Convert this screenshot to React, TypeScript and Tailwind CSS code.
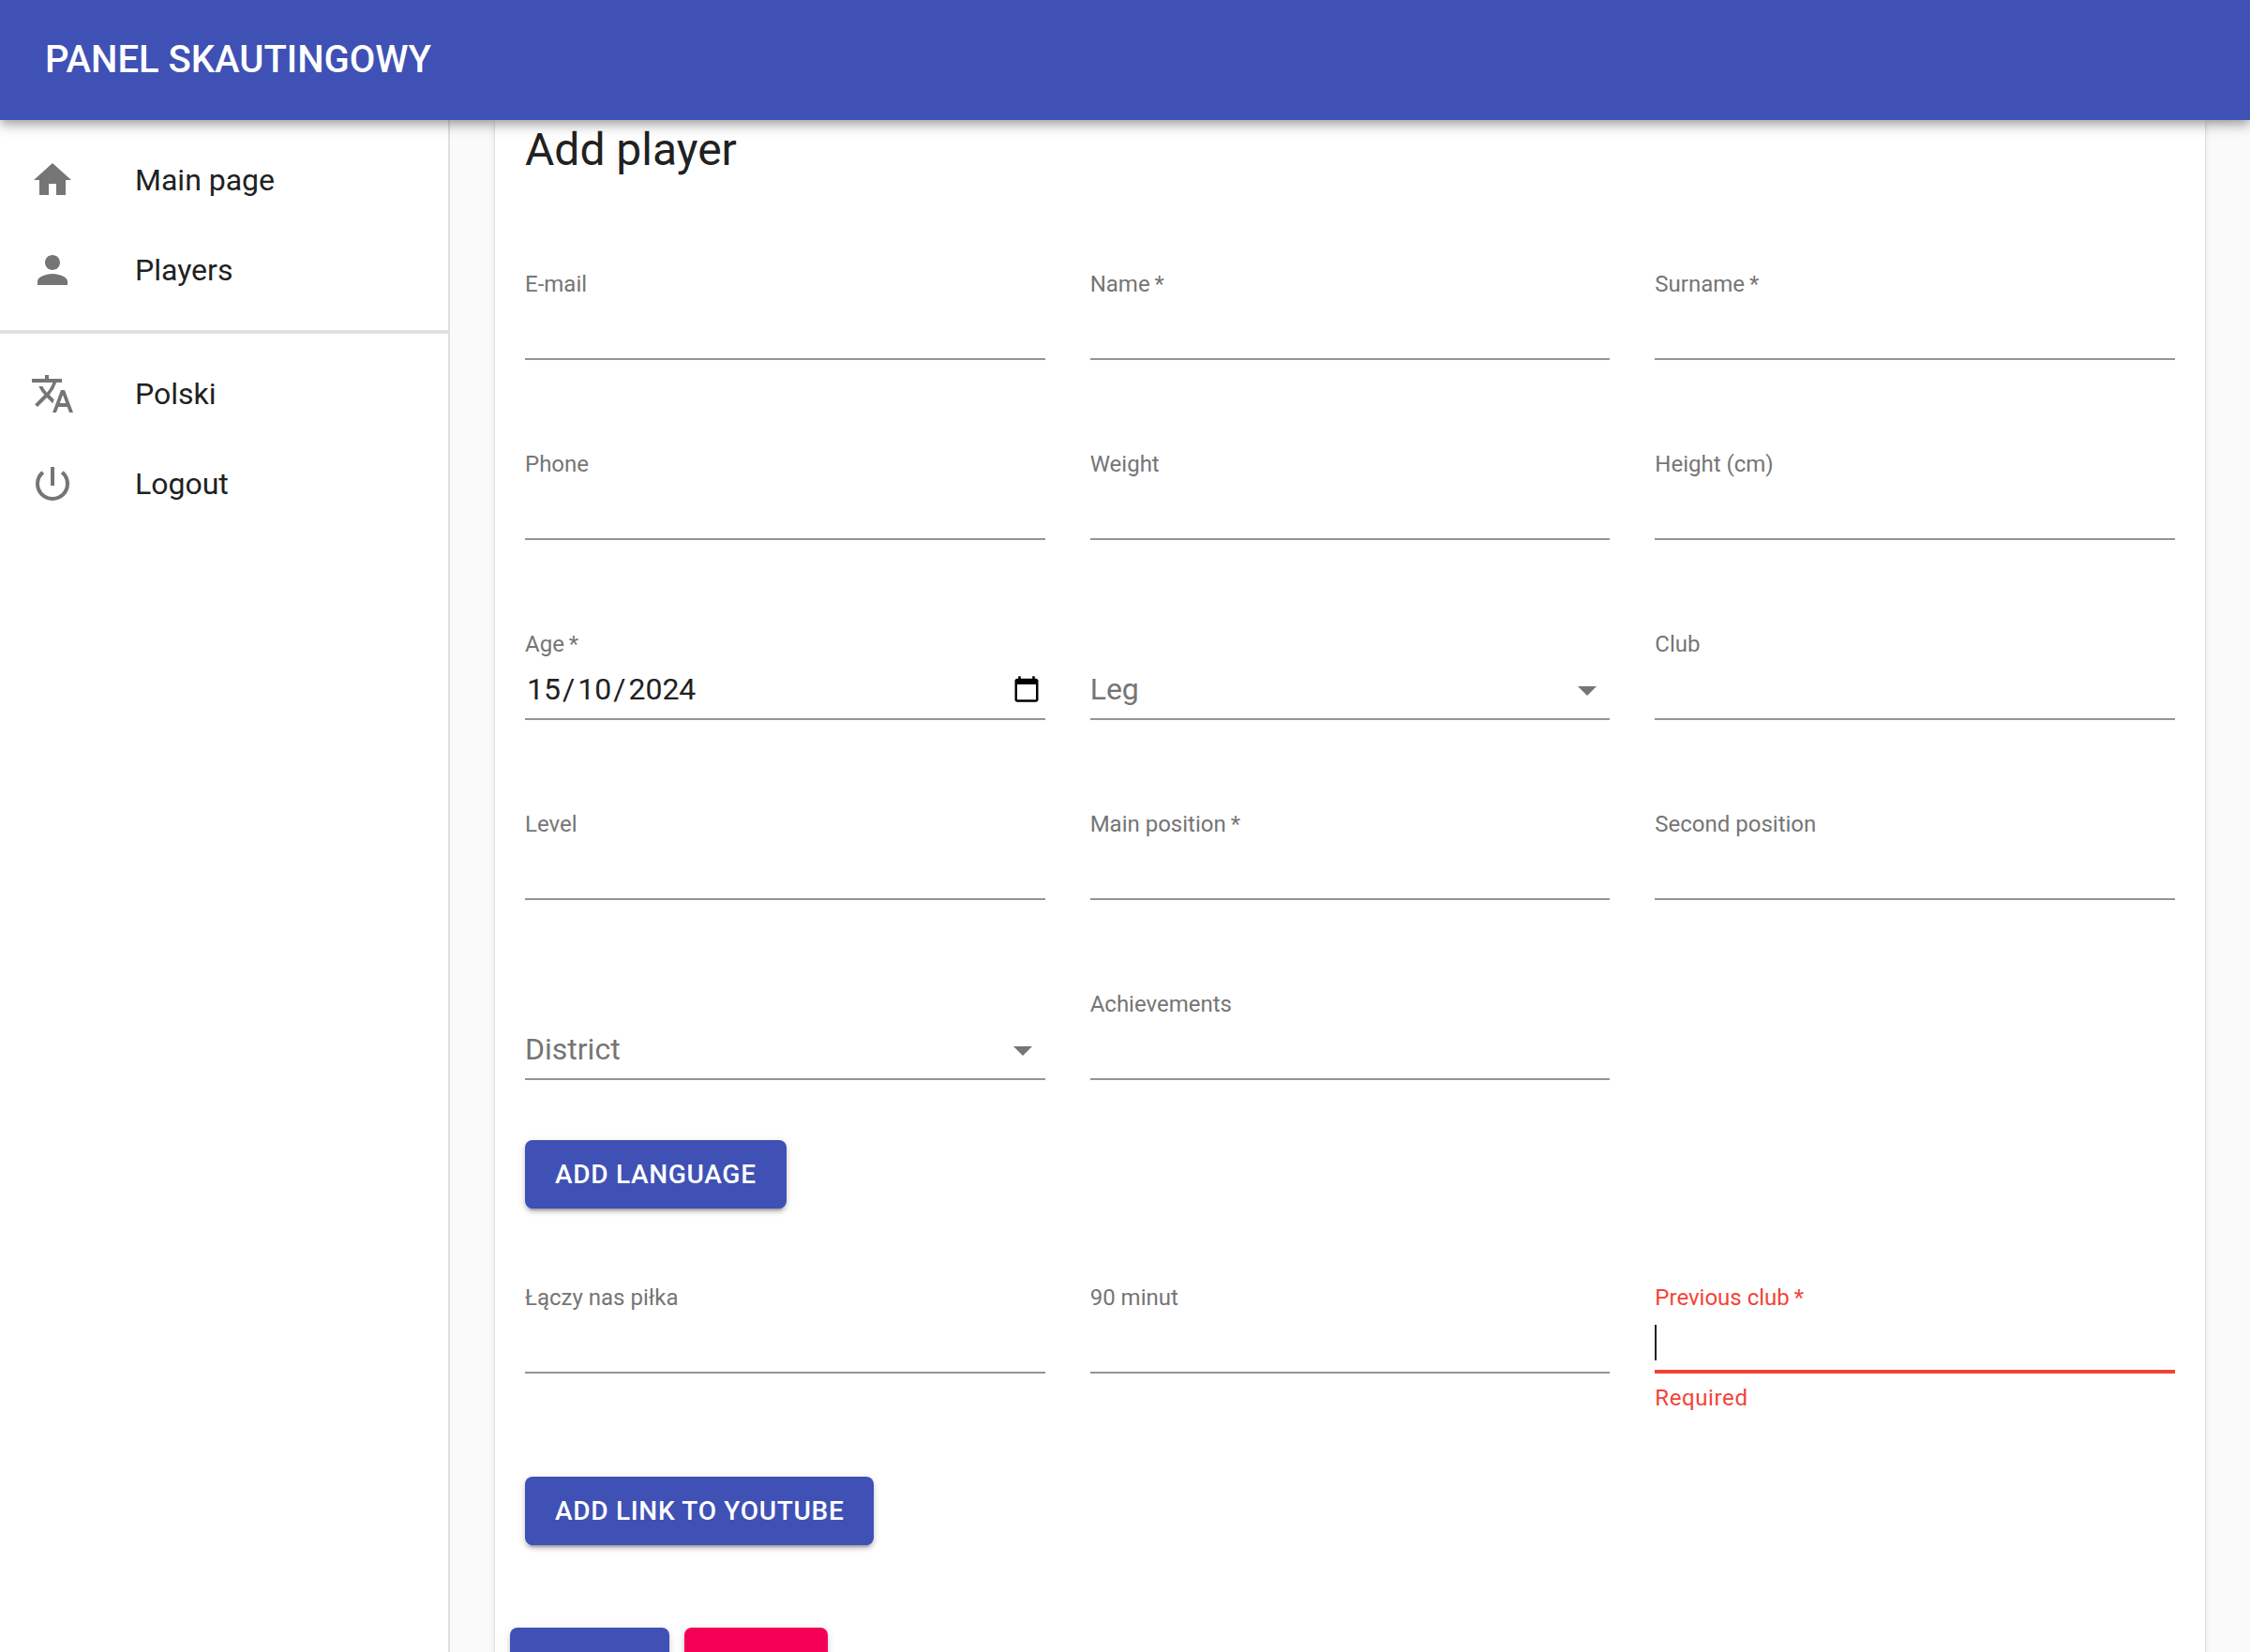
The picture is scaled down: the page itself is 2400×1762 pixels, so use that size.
import type { ReactNode } from "react";
import type { IconType } from "react-icons";
import {
  MdArrowDropDown,
  MdHome,
  MdPerson,
  MdPowerSettingsNew,
  MdTranslate,
} from "react-icons/md";

const labelClass = "mt-[3px] block h-[29px] text-2xl leading-6";
const boxClass = "h-16 border-b-2 border-[#949494]";

function NavItem({ icon: Icon, label }: { icon: IconType; label: string }) {
  return (
    <li>
      <a href="#" className="flex h-24 items-center px-8 text-[32px] leading-12 text-[#212121]">
        <Icon className="mr-16 size-12 text-[#757575]" aria-hidden />
        {label}
      </a>
    </li>
  );
}

function LabelText({ text, required = false }: { text: string; required?: boolean }) {
  return (
    <>
      {text}
      {required && "\u2009*"}
    </>
  );
}

function TextField({ id, label, required = false }: { id: string; label: string; required?: boolean }) {
  return (
    <div>
      <label htmlFor={id} className={`${labelClass} text-[#757575]`}>
        <LabelText text={label} required={required} />
      </label>
      <input
        id={id}
        type="text"
        required={required}
        className={`${boxClass} block w-full text-[32px] outline-none`}
      />
    </div>
  );
}

function SelectField({ id, label }: { id: string; label: string }) {
  return (
    <div className="relative pt-8">
      <select
        id={id}
        aria-label={label}
        defaultValue=""
        className={`${boxClass} block w-full appearance-none bg-transparent text-[32px] leading-10 text-[#757575] outline-none`}
      >
        <option value="">{label}</option>
      </select>
      <MdArrowDropDown
        className="pointer-events-none absolute right-0 bottom-2 size-12 text-[#757575]"
        aria-hidden
      />
    </div>
  );
}

function DateField() {
  const part = "w-10 px-0.5 outline-none";
  return (
    <div role="group" aria-labelledby="age-label">
      <label id="age-label" htmlFor="age-day" className={`${labelClass} text-[#757575]`}>
        <LabelText text="Age" required />
      </label>
      <div className={`${boxClass} flex items-center text-[32px] leading-[38px] text-[#212121]`}>
        <input id="age-day" aria-label="Day" defaultValue="15" className={part} />
        <span className="pr-px">/</span>
        <input aria-label="Month" defaultValue="10" className={part} />
        <span className="pr-px">/</span>
        <input aria-label="Year" defaultValue="2024" className="w-20 px-0.5 outline-none" />
        <button type="button" aria-label="Open calendar" className="mr-[5px] ml-auto text-black">
          <svg viewBox="0 0 24 24" className="size-[30px]" fill="currentColor" aria-hidden>
            <path d="M20 3h-1V1h-2v2H7V1H5v2H4c-1.1 0-2 .9-2 2v16c0 1.1.9 2 2 2h16c1.1 0 2-.9 2-2V5c0-1.1-.9-2-2-2zm0 18H4V8h16v13z" />
          </svg>
        </button>
      </div>
    </div>
  );
}

function PreviousClubField() {
  return (
    <div>
      <label htmlFor="previous-club" className={`${labelClass} text-[#f44336]`}>
        <LabelText text="Previous club" required />
      </label>
      <div className="relative">
        <input
          id="previous-club"
          type="text"
          required
          aria-invalid
          aria-describedby="previous-club-error"
          className="block h-16 w-full border-b-4 border-[#f44336] text-[32px] caret-transparent outline-none"
        />
        <span className="absolute top-3 left-0 h-[38px] w-0.5 bg-[#212121]" aria-hidden />
      </div>
      <p id="previous-club-error" className="mt-1.5 text-2xl leading-10 tracking-wide text-[#f44336]">
        Required
      </p>
    </div>
  );
}

function Button({ children, accent = false }: { children: ReactNode; accent?: boolean }) {
  return (
    <button
      type="button"
      className={`rounded-lg px-8 py-3 text-[28px] leading-[49px] font-medium tracking-wide text-white uppercase shadow-[0_6px_2px_-4px_rgba(0,0,0,0.2),0_4px_4px_0_rgba(0,0,0,0.14),0_2px_10px_0_rgba(0,0,0,0.12)] ${
        accent ? "bg-[#f50057]" : "bg-[#3f51b5]"
      }`}
    >
      {children}
    </button>
  );
}

export default function App() {
  return (
    <div className="flex h-screen flex-col overflow-hidden bg-[#fafafa] font-[Roboto,sans-serif] text-[#212121]">
      <header className="relative z-10 flex h-32 shrink-0 items-center bg-[#3f51b5] px-12 text-white shadow-[0_4px_8px_-2px_rgba(0,0,0,0.2),0_8px_10px_0_rgba(0,0,0,0.14),0_2px_20px_0_rgba(0,0,0,0.12)]">
        <h1 className="text-[40px] leading-16 font-medium uppercase">Panel skautingowy</h1>
      </header>
      <div className="flex min-h-0 flex-1">
        <nav className="w-[480px] shrink-0 border-r-2 border-[#e0e0e0] bg-white">
          <ul className="py-4">
            <NavItem icon={MdHome} label="Main page" />
            <NavItem icon={MdPerson} label="Players" />
          </ul>
          <hr className="border-t-4 border-[#e0e0e0]" />
          <ul className="py-4">
            <NavItem icon={MdTranslate} label="Polski" />
            <NavItem icon={MdPowerSettingsNew} label="Logout" />
          </ul>
        </nav>
        <main className="min-w-0 flex-1 overflow-hidden px-12">
          <form className="bg-white px-8 pb-8 shadow-[0_4px_2px_-2px_rgba(0,0,0,0.2),0_2px_2px_0_rgba(0,0,0,0.14),0_2px_6px_0_rgba(0,0,0,0.12)]">
            <h2 className="text-5xl leading-16">Add player</h2>
            <div className="mt-24 grid grid-cols-3 gap-x-12 gap-y-24">
              <TextField id="email" label="E-mail" />
              <TextField id="name" label="Name" required />
              <TextField id="surname" label="Surname" required />
              <TextField id="phone" label="Phone" />
              <TextField id="weight" label="Weight" />
              <TextField id="height" label="Height (cm)" />
              <DateField />
              <SelectField id="leg" label="Leg" />
              <TextField id="club" label="Club" />
              <TextField id="level" label="Level" />
              <TextField id="main-position" label="Main position" required />
              <TextField id="second-position" label="Second position" />
              <SelectField id="district" label="District" />
              <TextField id="achievements" label="Achievements" />
            </div>
            <div className="mt-16 flex">
              <Button>Add language</Button>
            </div>
            <div className="mt-20 grid grid-cols-3 gap-x-12">
              <TextField id="laczy-nas-pilka" label="Łączy nas piłka" />
              <TextField id="ninety-minut" label="90 minut" />
              <PreviousClubField />
            </div>
            <div className="mt-16 flex">
              <Button>Add link to YouTube</Button>
            </div>
            <div className="-mx-4 mt-22 flex gap-4">
              <Button>Submit</Button>
              <Button accent>Clear</Button>
            </div>
          </form>
        </main>
      </div>
    </div>
  );
}
